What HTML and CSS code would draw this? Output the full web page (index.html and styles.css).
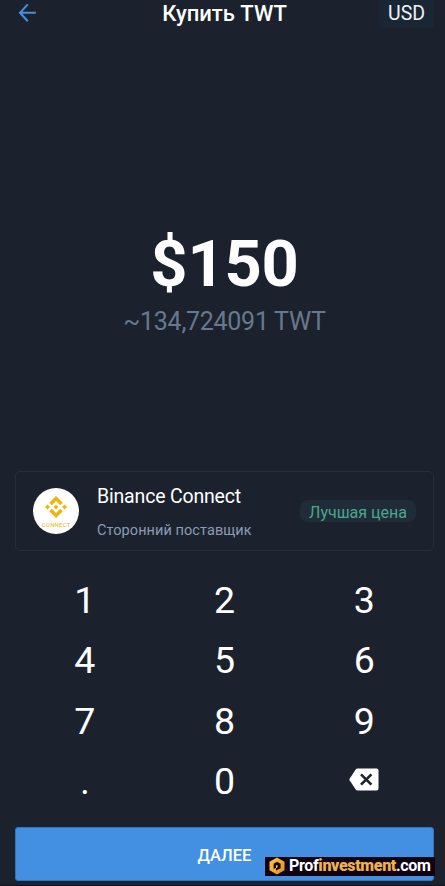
FILE: index.html
```html
<!DOCTYPE html>
<html lang="ru">
<head>
<meta charset="utf-8">
<title>Купить TWT</title>
<link rel="stylesheet" href="styles.css">
</head>
<body>
<main class="screen">
  <header class="header">
    <svg class="back" viewBox="0 0 20 20"><path d="M18.800 9.800H2.500M10.800 1.400 3 9.800l7.800 8.400"/></svg>
    <h1 class="title"><span>Купить TWT</span></h1>
    <div class="currency"><span>USD</span></div>
  </header>
  <section class="amount">
    <div class="fiat"><span>$150</span></div>
    <div class="crypto"><span>~134,724091 TWT</span></div>
  </section>
  <section class="provider">
    <svg class="logo" viewBox="0 0 46 46">
      <circle cx="23" cy="23" r="23" fill="#fff"/>
      <path fill="#edb414" transform="translate(12 8) scale(.92)" d="M16.624 13.920l2.717 2.715-7.353 7.353-7.353-7.352 2.718-2.716 4.635 4.659 4.636-4.659zm4.637-4.637L24 12l-2.715 2.716L18.568 12l2.693-2.717zm-9.273.001l2.717 2.692-2.717 2.717L9.272 12l2.716-2.716zm-9.272-.001L5.409 12l-2.692 2.692L0 12l2.716-2.717zM11.988.011l7.353 7.329-2.717 2.716-4.636-4.636-4.635 4.660-2.718-2.716z"/>
      <text class="logo-text" x="23" y="38.600" text-anchor="middle" textLength="28.500">CONNECT</text>
    </svg>
    <div class="info">
      <div class="name"><span>Binance Connect</span></div>
      <div class="kind"><span>Сторонний поставщик</span></div>
    </div>
    <div class="badge"><span>Лучшая цена</span></div>
  </section>
  <section class="keypad">
    <span>1</span><span>2</span><span>3</span>
    <span>4</span><span>5</span><span>6</span>
    <span>7</span><span>8</span><span>9</span>
    <span>.</span><span>0</span>
    <span><svg class="erase" viewBox="0 0 30 23"><path fill="#fff" d="M8.600.500H27.500a2 2 0 0 1 2 2v18a2 2 0 0 1-2 2H8.600q-1.200 0-1.900-1L.600 12.300q-.500-.800 0-1.600L6.700 1.500Q7.400.500 8.600.500z"/><path d="m12 6.300 10.400 10.400m0-10.400L12 16.700" stroke="#1b222d" stroke-width="2.600"/></svg></span>
  </section>
  <div class="next"><span>ДАЛЕЕ</span>
    <div class="watermark">
      <svg class="hex" viewBox="0 0 16 18">
        <defs><linearGradient id="gold" x1="0" y1="0" x2="1" y2="1"><stop offset="0" stop-color="#ffc43c"/><stop offset=".5" stop-color="#f6ac2c"/><stop offset="1" stop-color="#d98a30"/></linearGradient></defs>
        <path fill="url(#gold)" d="m8 .500 7.500 4.200v8.600L8 17.500.500 13.300V4.700z"/>
        <path fill="#100414" d="m8 4.800 3.600 2v4.400L7 13.600V11l-2.400.800V6.800z"/>
        <path fill="#ffc43c" d="M7 8.300h1.600v2L7 11.200z"/>
      </svg>
      <div class="brand"><span>Prof<b>investment</b>.com</span></div>
    </div>
  </div>
</main>
</body>
</html>
```
FILE: styles.css
```css
* { box-sizing: border-box; }
body {
  margin: 0;
  background: #1b222d;
  color: #fff;
  font-family: Roboto, "Liberation Sans", sans-serif;
}
.screen {
  height: 886px;
  overflow: hidden;
  display: flex;
  flex-direction: column;
  padding: 0 11px 0 15px;
  border-bottom: 1px solid #190f20;
}
.header {
  display: grid;
  grid-template-columns: 55px 1fr 55px;
  height: 28px;
}
.back { width: 20px; height: 20px; margin: 3px 0 0 2px; fill: none; stroke: #4391e3; stroke-width: 2; }
.title { margin: 0; font-size: 22px; font-weight: 500; line-height: 27px; text-align: center; white-space: nowrap; }
.currency {
  background: #1b2635;
  border-radius: 0 0 4px 4px;
  font-size: 19.5px;
  line-height: 27px;
  text-align: center;
  color: #eef1f5;
}
.amount { height: 443px; padding-top: 203px; text-align: center; white-space: nowrap; }
.fiat { font-size: 65px; font-weight: 700; line-height: 66px; letter-spacing: -0.2px; }
.crypto { margin-top: 10px; font-size: 25px; line-height: 30px; letter-spacing: -0.28px; color: #68788e; }
.provider {
  height: 80px;
  display: flex;
  align-items: center;
  padding: 0 17px;
  border: 1px solid #212f3c;
  border-radius: 5px;
  white-space: nowrap;
}
.logo { width: 46px; height: 46px; }
.logo-text { font: 400 6px Roboto, sans-serif; fill: #edb414; }
.info { margin-left: 18px; padding-top: 3px; flex: 1; }
.name { font-size: 19.5px; line-height: 26px; letter-spacing: -0.18px; }
.kind { margin-top: 11px; font-size: 14.5px; line-height: 20px; letter-spacing: 0.07px; color: #899bb7; }
.badge {
  width: 116px;
  height: 22px;
  border-radius: 8px;
  background: #202d38;
  color: #4aa690;
  font-size: 16px;
  line-height: 25px;
  text-align: center;
}
.keypad {
  display: grid;
  grid-template-columns: repeat(3, 1fr);
  grid-template-rows: repeat(4, 60.4px);
  margin-top: 18.6px;
  font-size: 37.5px;
}
.keypad > span { display: flex; align-items: center; justify-content: center; }
.erase { width: 30px; height: 23px; margin-bottom: 2px; }
.next {
  position: relative;
  flex: none;
  height: 54px;
  margin-top: 15.4px;
  border: 1px solid #3474b8;
  border-radius: 3px;
  background: #4390e2;
  font-size: 16.5px;
  font-weight: 500;
  line-height: 55px;
  text-align: center;
}
.watermark {
  position: absolute;
  right: -2px;
  bottom: 4px;
  width: 170px;
  height: 19px;
  display: flex;
  align-items: center;
  padding-left: 4px;
  background: #100414;
}
.hex { width: 16px; height: 18px; margin-right: 4px; }
.brand { font-size: 16px; font-weight: 700; line-height: 20px; letter-spacing: -0.34px; white-space: nowrap; }
.brand b { color: #eeb050; }
```
